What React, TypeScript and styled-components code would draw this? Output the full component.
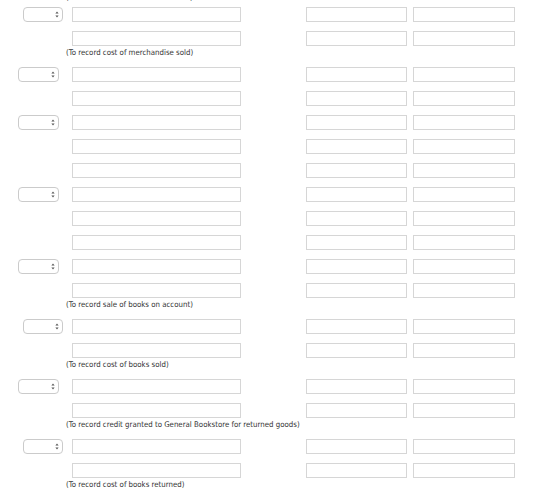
import React from "react";
import styled, { createGlobalStyle } from "styled-components";

const GlobalStyle = createGlobalStyle`
  html, body {
    margin: 0;
    padding: 0;
    background: #ffffff;
  }
  body {
    font-family: "DejaVu Sans Condensed", "DejaVu Sans", Verdana, sans-serif;
    font-stretch: condensed;
    color: #333333;
    overflow: hidden;
  }
`;

const Sheet = styled.div`
  display: flex;
  flex-direction: column;
  margin-top: -9px;
`;

const EntryRow = styled.div<{ $first?: boolean }>`
  display: flex;
  align-items: flex-end;
  height: ${(p) => (p.$first ? 19 : 24)}px;
`;

const PickerCell = styled.div`
  width: 72px;
  height: 15px;
  flex: none;
  display: flex;
  align-items: flex-end;
`;

const PickerWrap = styled.div<{ $wide?: boolean }>`
  position: relative;
  margin-left: ${(p) => (p.$wide ? 18 : 23)}px;
  width: ${(p) => (p.$wide ? 41 : 40)}px;
  height: 15px;
`;

const Picker = styled.select`
  display: block;
  appearance: none;
  -webkit-appearance: none;
  box-sizing: border-box;
  width: 100%;
  height: 15px;
  margin: 0;
  padding: 0 10px 0 3px;
  border: 1px solid #cbcbcb;
  border-radius: 4px;
  background: #ffffff;
  font-size: 7px;
  outline: none;
`;

const PickerArrows = styled.svg`
  position: absolute;
  right: 4px;
  top: 4px;
  width: 4px;
  height: 7px;
  pointer-events: none;
`;

const Field = styled.input<{ $w: number; $gap?: number }>`
  display: block;
  box-sizing: border-box;
  flex: none;
  width: ${(p) => p.$w}px;
  height: 15px;
  margin: 0 0 0 ${(p) => p.$gap ?? 0}px;
  padding: 0 3px;
  border: 1px solid #d6d6d6;
  border-radius: 0;
  background: #ffffff;
  font-size: 7px;
  outline: none;
`;

const Caption = styled.div`
  height: 12px;
  padding-left: 66px;
  font-size: 7.8px;
  line-height: 11px;
  padding-top: 1px;
  box-sizing: border-box;
  color: #333333;
  white-space: nowrap;
`;

type Line = { picker?: "narrow" | "wide"; first?: boolean };
type Block = { lines: Line[]; note?: string };

const blocks: Block[] = [
  { lines: [{ picker: "narrow", first: true }, {}], note: "(To record cost of merchandise sold)" },
  { lines: [{ picker: "wide" }, {}] },
  { lines: [{ picker: "wide" }, {}, {}] },
  { lines: [{ picker: "wide" }, {}, {}] },
  { lines: [{ picker: "wide" }, {}], note: "(To record sale of books on account)" },
  { lines: [{ picker: "narrow" }, {}], note: "(To record cost of books sold)" },
  { lines: [{ picker: "wide" }, {}], note: "(To record credit granted to General Bookstore for returned goods)" },
  { lines: [{ picker: "narrow" }, {}], note: "(To record cost of books returned)" },
];

function Arrows() {
  return (
    <PickerArrows viewBox="0 0 4 7">
      <path d="M2 0.5 L3.6 2.6 L0.4 2.6 Z" fill="#555" />
      <path d="M2 6.5 L3.6 4.4 L0.4 4.4 Z" fill="#555" />
    </PickerArrows>
  );
}

function JournalLine({ line }: { line: Line }) {
  return (
    <EntryRow $first={line.first}>
      <PickerCell>
        {line.picker && (
          <PickerWrap $wide={line.picker === "wide"}>
            <Picker defaultValue="">
              <option value=""></option>
              <option value="a">a.</option>
              <option value="b">b.</option>
            </Picker>
            <Arrows />
          </PickerWrap>
        )}
      </PickerCell>
      <Field $w={169} />
      <Field $w={101} $gap={65} />
      <Field $w={102} $gap={6} />
    </EntryRow>
  );
}

export default function App() {
  return (
    <>
      <GlobalStyle />
      <Sheet>
        <Caption>(To record sale of merchandise sold)</Caption>
        {blocks.map((b, i) => (
          <React.Fragment key={i}>
            {b.lines.map((l, j) => (
              <JournalLine key={j} line={l} />
            ))}
            {b.note && <Caption>{b.note}</Caption>}
          </React.Fragment>
        ))}
      </Sheet>
    </>
  );
}
